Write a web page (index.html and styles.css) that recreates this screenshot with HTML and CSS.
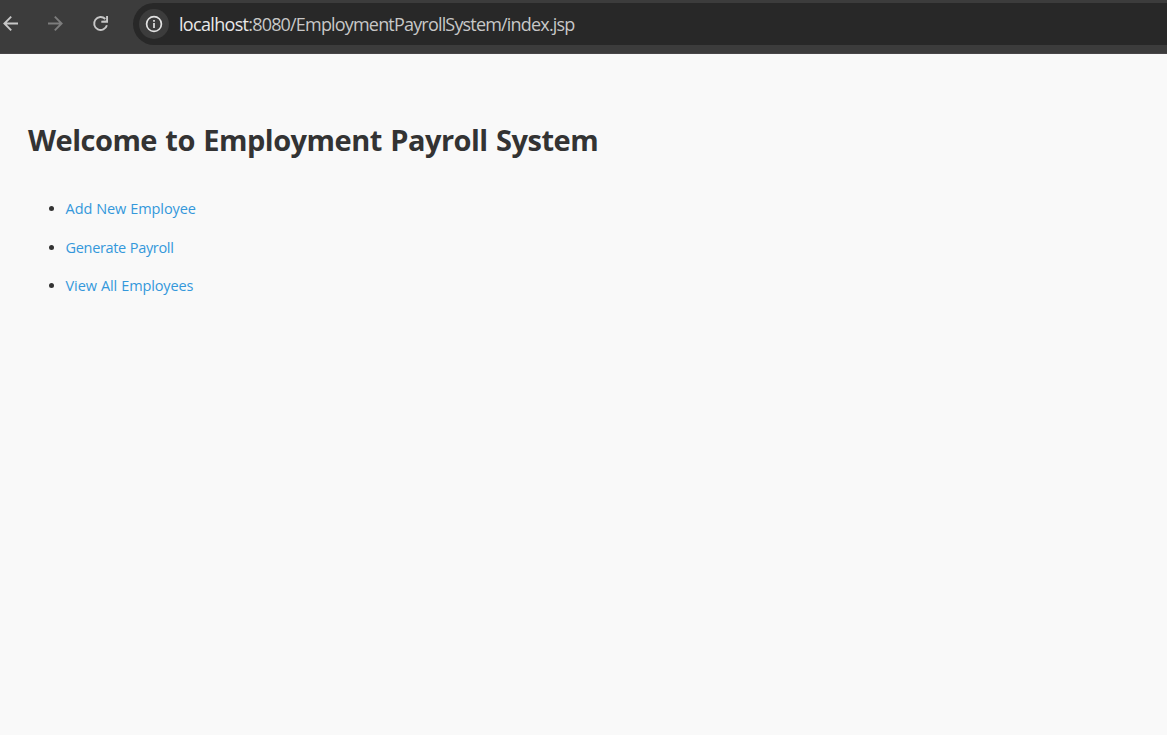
FILE: index.html
```html
<!DOCTYPE html>
<html lang="en">
<head>
<meta charset="utf-8">
<title>Employment Payroll System</title>
<link rel="stylesheet" href="styles.css">
</head>
<body>
<header class="toolbar">
  <nav class="controls">
    <svg class="icon" viewBox="0 0 18 18"><path d="M16 8.5H2.2M9.2 1.7 2.4 8.5l6.8 6.8"/></svg>
    <svg class="icon icon-disabled" viewBox="0 0 18 18"><path d="M1 8.5h13.8M7.8 1.7l6.8 6.8-6.8 6.8"/></svg>
    <svg class="icon" viewBox="0 0 18 18"><path d="M13.3 4A6.5 6.5 0 1 0 14.9 10.3"/><path class="solid" d="M16 1v6.7H9.3V5.8l4.8-.3V1z"/></svg>
  </nav>
  <div class="address">
    <span class="info"><svg viewBox="0 0 18 18"><circle cx="9" cy="9" r="7.4"/><path d="M9 8v5M9 4.9v1.9"/></svg></span>
    <span class="url"><span class="host">localhost</span><span class="path">:8080/EmploymentPayrollSystem/index.jsp</span></span>
  </div>
</header>
<main class="content">
  <h1 class="title">Welcome to Employment Payroll System</h1>
  <ul class="menu">
    <li><a class="link add" href="#">Add New Employee</a></li>
    <li><a class="link generate" href="#">Generate Payroll</a></li>
    <li><a class="link view" href="#">View All Employees</a></li>
  </ul>
</main>
</body>
</html>
```
FILE: styles.css
```css
* { box-sizing: border-box; }
body {
  margin: 0;
  min-height: 100vh;
  background: #f9f9f9;
  color: #333;
  font-family: "Segoe UI", "Open Sans", "Noto Sans", sans-serif;
}
.toolbar {
  display: flex;
  height: 54px;
  padding-top: 3px;
  background: #3c3c3c;
  border-bottom: 1px solid #484648;
}
.controls {
  display: flex;
  gap: 27px;
  width: 133px;
  padding: 12px 0 0 2px;
}
.icon { width: 18px; height: 18px; flex: none; fill: none; stroke: #c7c7c7; stroke-width: 1.9; }
.icon-disabled { stroke: #7d7d7d; }
.icon .solid { fill: #c7c7c7; stroke: none; }
.address {
  display: flex;
  align-items: center;
  flex: 1;
  height: 42px;
  padding-left: 6px;
  background: #282828;
  border-radius: 21px 0 0 21px;
}
.info {
  display: flex;
  align-items: center;
  justify-content: center;
  width: 30px;
  height: 30px;
  margin-right: 10px;
  border-radius: 50%;
  background: #3c3c3c;
}
.info svg { width: 18px; height: 18px; fill: none; stroke: #e3e3e3; stroke-width: 1.7; }
.url { display: flex; font-size: 18px; line-height: 24px; white-space: nowrap; }
.host { color: #e8e8e8; letter-spacing: -0.68px; }
.path { color: #c7c7c7; letter-spacing: -0.82px; }
.content { padding: 66px 28px 0; }
.title { margin: 0; font-size: 29px; line-height: 40px; font-weight: 700; letter-spacing: -0.5px; word-spacing: 1.3px; white-space: nowrap; }
.menu { margin: 30px 0 0; padding-left: 37.6px; font-size: 14.5px; line-height: 38.5px; }
.link { color: #3498db; text-decoration: none; letter-spacing: -0.12px; word-spacing: 0.5px; }
.generate { letter-spacing: -0.34px; }
```
